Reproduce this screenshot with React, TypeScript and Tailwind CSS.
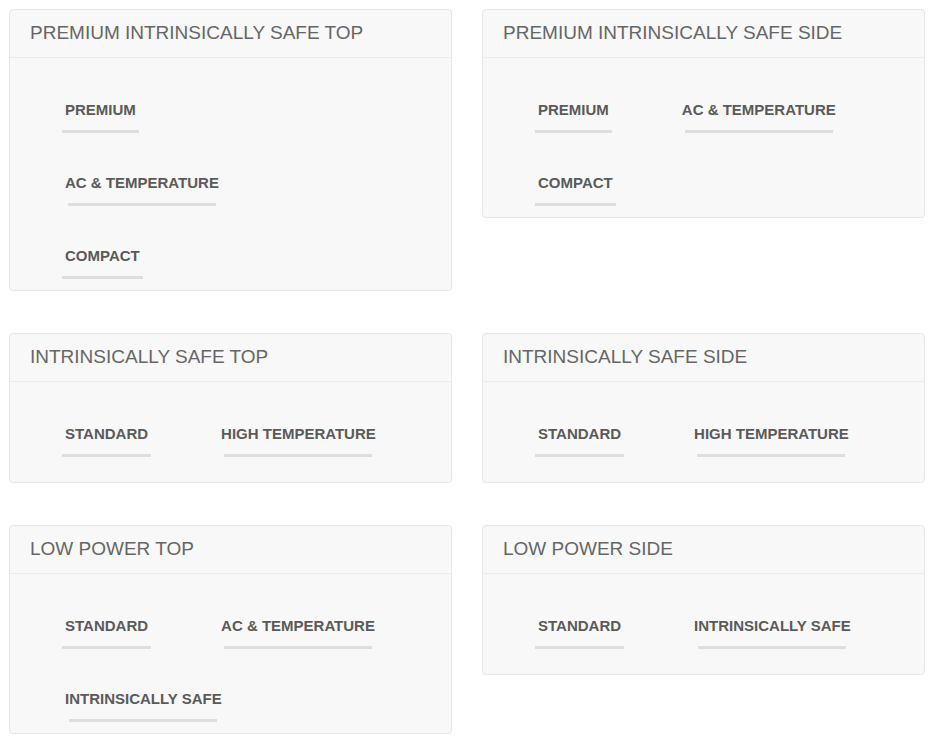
const panels: { title: string; rows: string[][] }[] = [
  { title: 'PREMIUM INTRINSICALLY SAFE TOP', rows: [['PREMIUM'], ['AC & TEMPERATURE'], ['COMPACT']] },
  { title: 'PREMIUM INTRINSICALLY SAFE SIDE', rows: [['PREMIUM', 'AC & TEMPERATURE'], ['COMPACT']] },
  { title: 'INTRINSICALLY SAFE TOP', rows: [['STANDARD', 'HIGH TEMPERATURE']] },
  { title: 'INTRINSICALLY SAFE SIDE', rows: [['STANDARD', 'HIGH TEMPERATURE']] },
  { title: 'LOW POWER TOP', rows: [['STANDARD', 'AC & TEMPERATURE'], ['INTRINSICALLY SAFE']] },
  { title: 'LOW POWER SIDE', rows: [['STANDARD', 'INTRINSICALLY SAFE']] },
]

function Item({ label }: { label: string }) {
  return (
    <a href="#" className="inline-flex flex-col items-center">
      <span className="px-[3px] text-[15px] font-bold leading-[20px] text-[#5a5a5a] whitespace-nowrap">
        {label}
      </span>
      <span className="mt-[10px] h-[3px] w-full max-w-[148px] bg-[#dedede]"></span>
    </a>
  )
}

function Panel({ title, rows }: { title: string; rows: string[][] }) {
  return (
    <div className="self-start rounded-[4px] border border-[#e6e6e6] bg-[#f8f8f8]">
      <div className="h-[48px] border-b border-[#ececec] px-[20px] pt-[12px] text-[19px] leading-[22px] text-[#666]">
        {title}
      </div>
      <div className="flex min-h-[100px] flex-col gap-y-[40px] pb-[11px] pl-[52px] pt-[42px]">
        {rows.map((row, i) => (
          <div key={i} className="flex gap-x-[67px]">
            {row.map(label => (
              <Item key={label} label={label} />
            ))}
          </div>
        ))}
      </div>
    </div>
  )
}

export default function App() {
  return (
    <div className="min-h-[741px] bg-white pl-[9px] pt-[9px]" style={{ fontFamily: '"Liberation Sans", Arial, sans-serif' }}>
      <div className="grid grid-cols-[443px_443px] gap-x-[30px] gap-y-[42px]">
        {panels.map(p => (
          <Panel key={p.title} title={p.title} rows={p.rows} />
        ))}
      </div>
    </div>
  )
}
